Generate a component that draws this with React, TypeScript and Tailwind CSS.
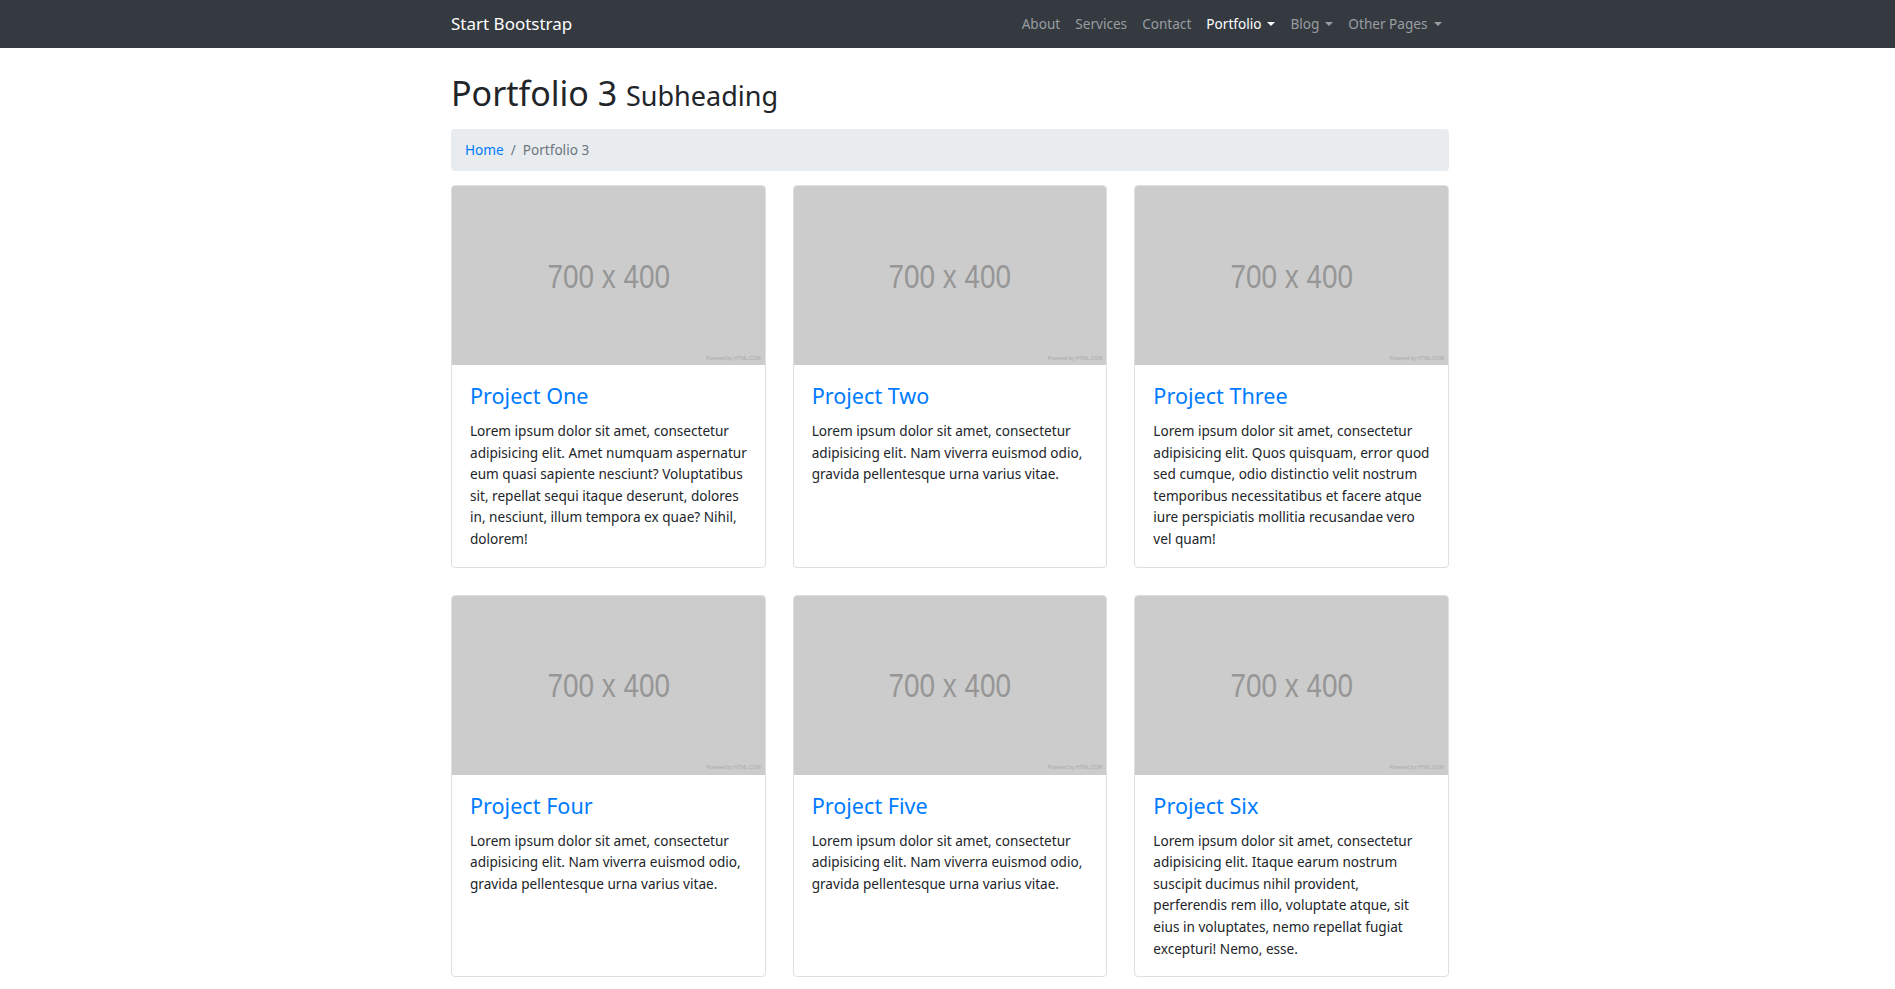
import React from "react";

interface IProject {
  title: string;
  lines: string[];
}

const projects: IProject[] = [
  {
    title: "Project One",
    lines: [
      "Lorem ipsum dolor sit amet, consectetur",
      "adipisicing elit. Amet numquam aspernatur",
      "eum quasi sapiente nesciunt? Voluptatibus",
      "sit, repellat sequi itaque deserunt, dolores",
      "in, nesciunt, illum tempora ex quae? Nihil,",
      "dolorem!",
    ],
  },
  {
    title: "Project Two",
    lines: [
      "Lorem ipsum dolor sit amet, consectetur",
      "adipisicing elit. Nam viverra euismod odio,",
      "gravida pellentesque urna varius vitae.",
    ],
  },
  {
    title: "Project Three",
    lines: [
      "Lorem ipsum dolor sit amet, consectetur",
      "adipisicing elit. Quos quisquam, error quod",
      "sed cumque, odio distinctio velit nostrum",
      "temporibus necessitatibus et facere atque",
      "iure perspiciatis mollitia recusandae vero",
      "vel quam!",
    ],
  },
  {
    title: "Project Four",
    lines: [
      "Lorem ipsum dolor sit amet, consectetur",
      "adipisicing elit. Nam viverra euismod odio,",
      "gravida pellentesque urna varius vitae.",
    ],
  },
  {
    title: "Project Five",
    lines: [
      "Lorem ipsum dolor sit amet, consectetur",
      "adipisicing elit. Nam viverra euismod odio,",
      "gravida pellentesque urna varius vitae.",
    ],
  },
  {
    title: "Project Six",
    lines: [
      "Lorem ipsum dolor sit amet, consectetur",
      "adipisicing elit. Itaque earum nostrum",
      "suscipit ducimus nihil provident,",
      "perferendis rem illo, voluptate atque, sit",
      "eius in voluptates, nemo repellat fugiat",
      "excepturi! Nemo, esse.",
    ],
  },
];

const Caret: React.FC = () => (
  <span className="ml-[6px] inline-block align-middle border-t-[4.5px] border-x-[4.5px] border-x-transparent border-t-current" />
);

const NavItem: React.FC<{ label: string; active?: boolean; dropdown?: boolean }> = ({
  label,
  active,
  dropdown,
}) => (
  <li>
    <a
      href="#"
      className={
        active
          ? "flex items-center px-[7.5px] text-white"
          : "flex items-center px-[7.5px] text-[#9a9da0]"
      }
    >
      {label}
      {dropdown && <Caret />}
    </a>
  </li>
);

const ProjectCard: React.FC<{ project: IProject }> = ({ project }) => (
  <div className="flex flex-col rounded-[4px] border border-[#dfdfdf] bg-white">
    <a href="#" className="relative flex h-[179px] items-center justify-center rounded-t-[3px] bg-[#cccccc]">
      <span className="scale-x-[0.82] font-['Liberation_Sans',sans-serif] text-[34px] leading-none text-[#969696]">
        700 x 400
      </span>
      <span className="absolute bottom-[3px] right-[4px] font-['Liberation_Sans',sans-serif] text-[5px] text-[#a8a8a8]">
        Powered by HTML.COM
      </span>
    </a>
    <div className="px-[18px] pt-[18px] pb-[17px]">
      <h4 className="mb-[11px] text-[21.6px] leading-[26px] font-normal">
        <a href="#" className="text-[#007bff]">
          {project.title}
        </a>
      </h4>
      <p className="text-[13.6px] leading-[21.6px] text-[#212529]">
        {project.lines.map((line, i) => (
          <span key={i} className="block whitespace-nowrap">
            {line}
          </span>
        ))}
      </p>
    </div>
  </div>
);

export default function App() {
  return (
    <div className="min-h-screen bg-white font-['Noto_Sans','Open_Sans',sans-serif] text-[#212529]">
      <nav className="h-[48px] bg-[#343a40]">
        <div className="mx-auto flex h-full w-[1003px] items-center justify-between pl-[5px]">
          <a href="#" className="text-[17px] text-white">
            Start Bootstrap
          </a>
          <ul className="flex items-center text-[13.6px]">
            <NavItem label="About" />
            <NavItem label="Services" />
            <NavItem label="Contact" />
            <NavItem label="Portfolio" active dropdown />
            <NavItem label="Blog" dropdown />
            <NavItem label="Other Pages" dropdown />
          </ul>
        </div>
      </nav>

      <main className="mx-auto w-[1003px] pl-[5px] pb-[20px]">
        <h1 className="mt-[24px] mb-[12px] text-[34px] leading-[43px] font-normal">
          Portfolio 3 <small className="text-[27px]">Subheading</small>
        </h1>

        <ol className="mb-[14px] flex items-center rounded-[4px] bg-[#e9ecef] px-[14px] py-[10px] text-[13.6px] leading-[22px]">
          <li>
            <a href="#" className="text-[#007bff]">
              Home
            </a>
          </li>
          <li className="px-[7px] text-[#6c757d]">/</li>
          <li className="text-[#6c757d]">Portfolio 3</li>
        </ol>

        <div className="grid grid-cols-3 gap-x-[27px] gap-y-[27px]">
          {projects.map((p) => (
            <ProjectCard key={p.title} project={p} />
          ))}
        </div>
      </main>
    </div>
  );
}
